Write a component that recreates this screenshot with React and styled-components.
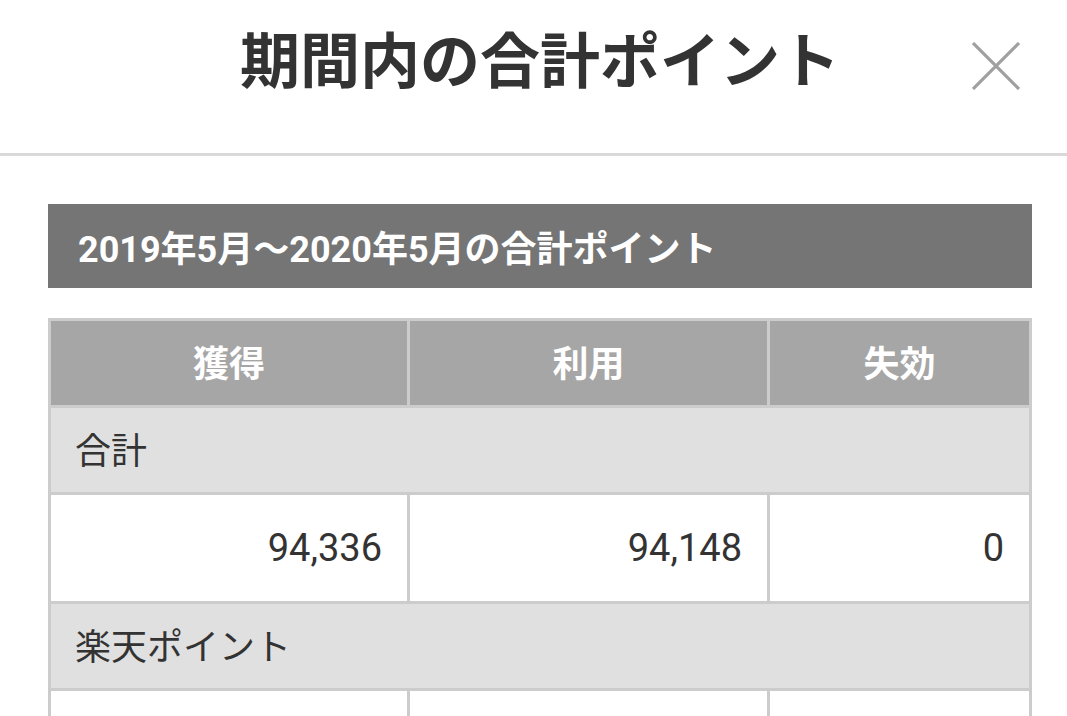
import React from 'react'
import styled, { createGlobalStyle } from 'styled-components'

const GlobalStyle = createGlobalStyle`
  html, body {
    margin: 0;
    padding: 0;
    background: #fff;
    overflow: hidden;
  }
  body {
    font-family: Roboto, "Noto Sans CJK JP", sans-serif;
    color: #333;
  }
`

const Page = styled.div`
  width: 1067px;
  height: 716px;
  overflow: hidden;
`

const Header = styled.header`
  position: relative;
  height: 153px;
  border-bottom: 3px solid #d9d9d9;
  display: flex;
  align-items: center;
  justify-content: center;
  padding-left: 13px;
  box-sizing: content-box;
`

const Title = styled.h1`
  margin: 0 0 27px;
  font-size: 60px;
  font-weight: 700;
  line-height: 1;
  color: #333;
`

const CloseButton = styled.button`
  position: absolute;
  top: 42px;
  right: 47px;
  width: 48px;
  height: 48px;
  padding: 0;
  border: 0;
  background: none;
  cursor: pointer;
  svg {
    display: block;
  }
`

const Content = styled.main`
  padding: 48px 35px 0 48px;
`

const Banner = styled.div`
  height: 84px;
  background: #757575;
  color: #fff;
  display: flex;
  align-items: center;
  padding-left: 30px;
  font-size: 36px;
  font-weight: 700;
`

const Table = styled.div`
  margin-top: 30px;
  display: grid;
  grid-template-columns: 356px 357px 1fr;
  gap: 3px;
  padding: 3px;
  background: #cccccc;
`

const HeadCell = styled.div`
  height: 84px;
  box-sizing: border-box;
  padding-bottom: 5px;
  background: #a6a6a6;
  color: #fff;
  font-size: 36px;
  font-weight: 700;
  display: flex;
  align-items: center;
  justify-content: center;
`

const GroupRow = styled.div`
  grid-column: 1 / -1;
  height: 84px;
  box-sizing: border-box;
  padding: 0 0 5px 24px;
  background: #e0e0e0;
  display: flex;
  align-items: center;
  font-size: 36px;
  color: #333;
`

const ValueCell = styled.div`
  height: 106px;
  background: #fff;
  display: flex;
  align-items: center;
  justify-content: flex-end;
  padding-right: 25px;
  font-size: 38px;
  color: #333;
`

const groups = [
  { label: '合計', values: ['94,336', '94,148', '0'] },
  { label: '楽天ポイント', values: ['', '', ''] },
]

const App = () => {
  return (
    <Page>
      <GlobalStyle />
      <Header>
        <Title>期間内の合計ポイント</Title>
        <CloseButton aria-label="閉じる">
          <svg width="48" height="48" viewBox="0 0 48 48">
            <path d="M1 1 L47 47 M47 1 L1 47" stroke="#a0a0a0" strokeWidth="3.2" fill="none" />
          </svg>
        </CloseButton>
      </Header>
      <Content>
        <Banner>2019年5月〜2020年5月の合計ポイント</Banner>
        <Table>
          <HeadCell>獲得</HeadCell>
          <HeadCell>利用</HeadCell>
          <HeadCell>失効</HeadCell>
          {groups.map(g => (
            <React.Fragment key={g.label}>
              <GroupRow>{g.label}</GroupRow>
              {g.values.map((v, i) => (
                <ValueCell key={i}>{v}</ValueCell>
              ))}
            </React.Fragment>
          ))}
        </Table>
      </Content>
    </Page>
  )
}

export default App
